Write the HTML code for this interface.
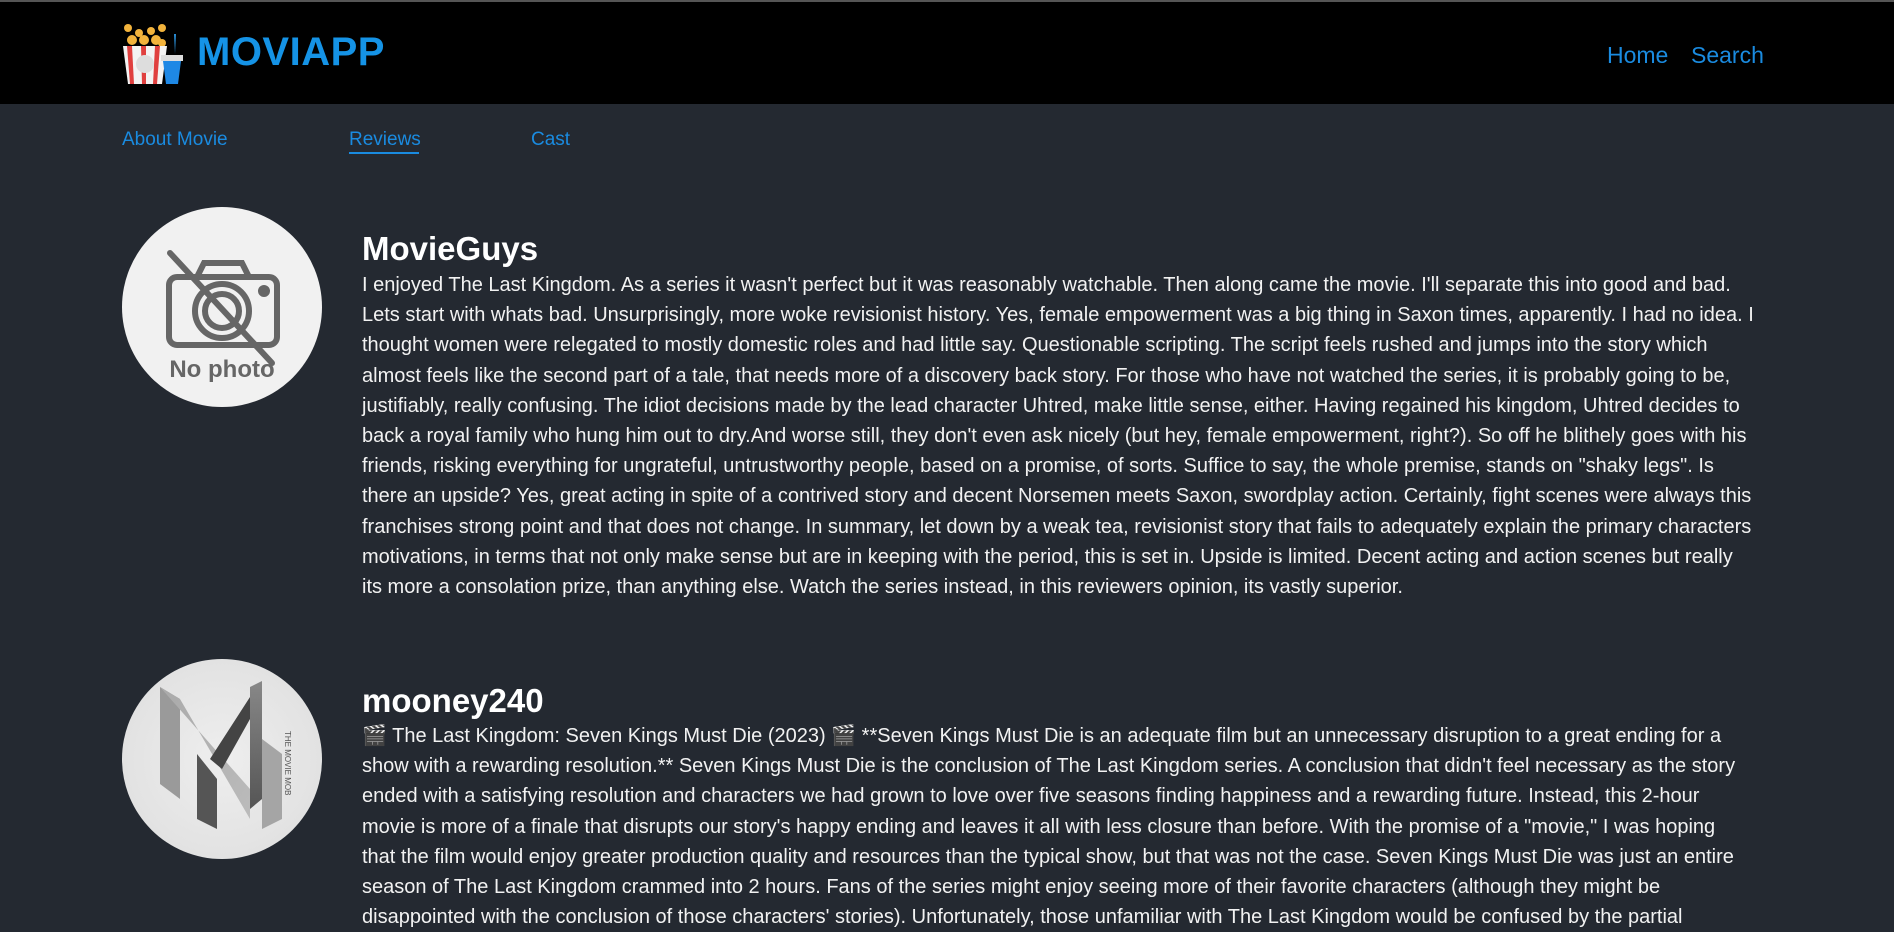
<!DOCTYPE html>
<html><head><meta charset="utf-8">
<style>
html,body{margin:0;padding:0;}
body{width:1894px;height:924px;overflow:hidden;background:#242931;font-family:"Liberation Sans",sans-serif;color:#f2f2f2;position:relative;}
.hdr{position:absolute;left:0;top:0;width:1894px;height:104px;background:#000;border-top:2px solid #555;box-sizing:border-box;}
.logo{position:absolute;left:122px;top:22px;}
.brand{position:absolute;left:197px;top:28px;font-size:40px;font-weight:bold;color:#1593e6;letter-spacing:0.5px;}
.nav{position:absolute;top:40px;font-size:23px;color:#1a8be0;}
.tab{position:absolute;top:129px;font-size:19px;color:#1a8be0;}
.ul{position:absolute;left:349px;top:152px;width:70px;height:2px;background:#1a8be0;}
.av{position:absolute;left:122px;width:200px;height:200px;border-radius:50%;background:#f1f1f1;overflow:hidden;}
.name{position:absolute;left:362px;font-size:33px;font-weight:bold;color:#fff;}
.txt{position:absolute;left:362px;font-size:20px;line-height:30.2px;color:#f2f2f2;}
.txt div{white-space:nowrap;}
</style></head><body>
<div class="hdr">
 <svg class="logo" width="62" height="60" viewBox="0 0 62 60">
  <g fill="#f2b33c"><circle cx="6" cy="4" r="4"/><circle cx="17" cy="9" r="4"/><circle cx="29" cy="7" r="4"/><circle cx="40" cy="4" r="4"/><circle cx="10" cy="16" r="5"/><circle cx="22" cy="16" r="5"/><circle cx="34" cy="16" r="5"/><circle cx="40" cy="19" r="4"/></g>
  <path d="M1 22 L45 22 L40 60 L6 60 Z" fill="#f3f3f3"/>
  <g fill="#e0403f"><path d="M5 22 L10 22 L12 60 L8 60Z"/><path d="M19 22 L24 22 L24 60 L20 60Z"/><path d="M33 22 L38 22 L35 60 L31 60Z"/></g>
  <circle cx="23" cy="40" r="9" fill="#ddd"/>
  <path d="M52 10 L54 10 L53 30 Z" fill="#2a8fd8"/>
  <rect x="39" y="31" width="22" height="6" fill="#ddd"/>
  <path d="M41 37 L59 37 L56 60 L44 60Z" fill="#1e88e5"/>
 </svg>
 <div class="brand">MOVIAPP</div>
 <div class="nav" style="left:1607px">Home</div>
 <div class="nav" style="left:1691px">Search</div>
</div>
<div class="tab" style="left:122px">About Movie</div>
<div class="tab" style="left:349px">Reviews</div>
<div class="tab" style="left:531px">Cast</div>
<div class="ul"></div>

<div class="av" style="top:207px">
 <svg width="200" height="200" viewBox="0 0 200 200">
  <g fill="none" stroke="#666" stroke-width="6" stroke-linecap="round">
   <rect x="47" y="70" width="108" height="68" rx="8"/>
   <path d="M75 70 L82 56 L120 56 L127 70"/>
   <circle cx="100" cy="104" r="27"/><circle cx="100" cy="104" r="17"/>
   <circle cx="142" cy="84" r="3"/>
   <path d="M48 46 L150 156"/>
  </g>
  <text x="100" y="170" text-anchor="middle" font-family="Liberation Sans Narrow, Liberation Sans" font-weight="bold" font-size="24" fill="#666">No photo</text>
 </svg>
</div>
<div class="name" style="top:230px">MovieGuys</div>
<div class="txt" style="top:270px">
<div>I enjoyed The Last Kingdom. As a series it wasn't perfect but it was reasonably watchable. Then along came the movie. I'll separate this into good and bad.</div>
<div>Lets start with whats bad. Unsurprisingly, more woke revisionist history. Yes, female empowerment was a big thing in Saxon times, apparently. I had no idea. I</div>
<div>thought women were relegated to mostly domestic roles and had little say. Questionable scripting. The script feels rushed and jumps into the story which</div>
<div>almost feels like the second part of a tale, that needs more of a discovery back story. For those who have not watched the series, it is probably going to be,</div>
<div>justifiably, really confusing. The idiot decisions made by the lead character Uhtred, make little sense, either. Having regained his kingdom, Uhtred decides to</div>
<div>back a royal family who hung him out to dry.And worse still, they don't even ask nicely (but hey, female empowerment, right?). So off he blithely goes with his</div>
<div>friends, risking everything for ungrateful, untrustworthy people, based on a promise, of sorts. Suffice to say, the whole premise, stands on "shaky legs". Is</div>
<div>there an upside? Yes, great acting in spite of a contrived story and decent Norsemen meets Saxon, swordplay action. Certainly, fight scenes were always this</div>
<div>franchises strong point and that does not change. In summary, let down by a weak tea, revisionist story that fails to adequately explain the primary characters</div>
<div>motivations, in terms that not only make sense but are in keeping with the period, this is set in. Upside is limited. Decent acting and action scenes but really</div>
<div>its more a consolation prize, than anything else. Watch the series instead, in this reviewers opinion, its vastly superior.</div>
</div>

<div class="av" style="top:659px;background:radial-gradient(circle,#eee,#ddd)">
 <svg width="200" height="200" viewBox="0 0 200 200">
  <defs><linearGradient id="g" x1="0" y1="0" x2="0" y2="1"><stop offset="0" stop-color="#888"/><stop offset="1" stop-color="#555"/></linearGradient>
  <linearGradient id="g2" x1="0" y1="0" x2="1" y2="1"><stop offset="0" stop-color="#aaa"/><stop offset="1" stop-color="#bbb"/></linearGradient></defs>
  <path d="M38 28 L58 40 L58 140 L38 125 Z" fill="#9a9a9a"/>
  <path d="M38 28 L58 40 L128 160 L128 130 Z" fill="url(#g2)"/>
  <path d="M128 28 L140 22 L140 140 L128 150 Z" fill="url(#g)"/>
  <path d="M88 100 L128 38 L128 60 L100 110 Z" fill="#444"/>
  <path d="M75 95 L95 120 L95 170 L75 160 Z" fill="#555"/>
  <path d="M140 80 L160 95 L160 160 L140 170 Z" fill="#a5a5a5"/>
  <text x="0" y="0" transform="translate(163,72) rotate(90)" font-size="8" font-family="Liberation Sans" fill="#555">THE MOVIE MOB</text>
 </svg>
</div>
<div class="name" style="top:682px">mooney240</div>
<div class="txt" style="top:721px">
<div>🎬 The Last Kingdom: Seven Kings Must Die (2023) 🎬 **Seven Kings Must Die is an adequate film but an unnecessary disruption to a great ending for a</div>
<div>show with a rewarding resolution.** Seven Kings Must Die is the conclusion of The Last Kingdom series. A conclusion that didn't feel necessary as the story</div>
<div>ended with a satisfying resolution and characters we had grown to love over five seasons finding happiness and a rewarding future. Instead, this 2-hour</div>
<div>movie is more of a finale that disrupts our story's happy ending and leaves it all with less closure than before. With the promise of a "movie," I was hoping</div>
<div>that the film would enjoy greater production quality and resources than the typical show, but that was not the case. Seven Kings Must Die was just an entire</div>
<div>season of The Last Kingdom crammed into 2 hours. Fans of the series might enjoy seeing more of their favorite characters (although they might be</div>
<div>disappointed with the conclusion of those characters' stories). Unfortunately, those unfamiliar with The Last Kingdom would be confused by the partial</div>
</div>
</body></html>
